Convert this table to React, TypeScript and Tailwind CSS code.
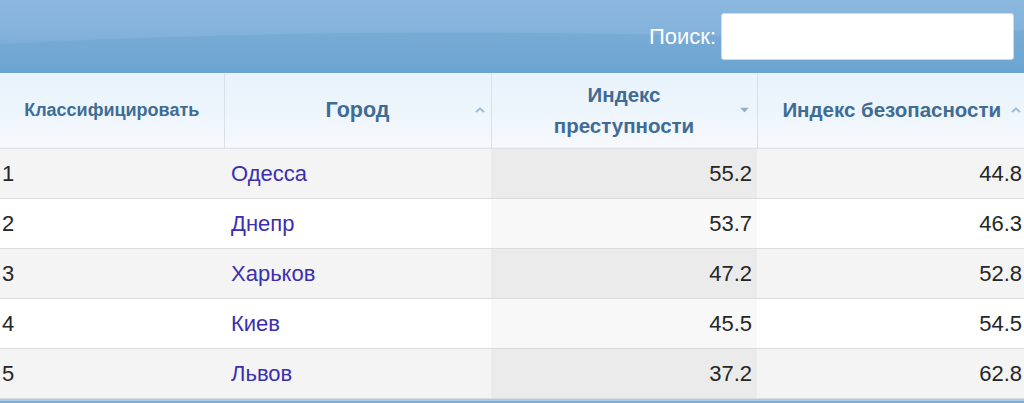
import React from 'react'

type Row = { rank: number; city: string; crime: string; safety: string }

const rows: Row[] = [
  { rank: 1, city: 'Одесса', crime: '55.2', safety: '44.8' },
  { rank: 2, city: 'Днепр', crime: '53.7', safety: '46.3' },
  { rank: 3, city: 'Харьков', crime: '47.2', safety: '52.8' },
  { rank: 4, city: 'Киев', crime: '45.5', safety: '54.5' },
  { rank: 5, city: 'Львов', crime: '37.2', safety: '62.8' },
]

function ChevronUp() {
  return (
    <svg width="10" height="6" viewBox="0 0 10 6" className="absolute top-1/2 -translate-y-1/2">
      <path d="M1 5 L5 1.5 L9 5" fill="none" stroke="#9dbad3" strokeWidth="1.8" />
    </svg>
  )
}

function TriangleDown() {
  return (
    <svg width="9" height="5" viewBox="0 0 9 5" className="absolute top-1/2 -translate-y-1/2">
      <path d="M0 0 L9 0 L4.5 5 Z" fill="#8fb0cc" />
    </svg>
  )
}

export default function App() {
  return (
    <div className="w-[1024px] h-[403px] overflow-hidden bg-white font-['Liberation_Sans',Arial,sans-serif]">
      {/* top bar */}
      <div className="relative h-[73px] bg-gradient-to-b from-[#8cb8de] via-[#82b1da] to-[#6aa3d1] flex items-center justify-end pr-[10px] overflow-hidden">
        <svg className="absolute inset-0" width="1024" height="73" viewBox="0 0 1024 73" preserveAspectRatio="none">
          <path d="M0 44 C 200 34, 400 30, 620 34 S 900 40, 1024 30 L1024 73 L0 73 Z" fill="#6ea5d2" opacity="0.55" />
        </svg>
        <span className="relative text-white text-[22px] mr-[5px]">Поиск:</span>
        <div className="relative w-[293px] h-[47px] bg-white rounded-[3px] border border-[#c9dcec]" />
      </div>

      <table className="table-fixed border-collapse w-[1024px]">
        <colgroup>
          <col className="w-[224px]" />
          <col className="w-[267px]" />
          <col className="w-[266px]" />
          <col className="w-[267px]" />
        </colgroup>
        <thead>
          <tr className="h-[75px] bg-gradient-to-b from-[#e9f3fc] via-[#edf5fc] to-[#f6f9fd] border-b border-[#dfe4ea] text-[#3f6c94] font-bold">
            <th className="text-[18px] text-center align-middle">Классифицировать</th>
            <th className="relative text-[21.5px] text-center align-middle border-l border-[#d8e1ea]">
              Город
              <span className="absolute right-[16px] top-1/2"><ChevronUp /></span>
            </th>
            <th className="relative text-[20.5px] leading-[31px] text-center align-middle border-l border-[#d8e1ea]">
              Индекс
              <br />
              преступности
              <span className="absolute right-[17px] top-1/2"><TriangleDown /></span>
            </th>
            <th className="relative text-[20.5px] text-center align-middle border-l border-[#d8e1ea]">
              <span className="pl-[2px]">Индекс безопасности</span>
              <span className="absolute right-[13px] top-1/2"><ChevronUp /></span>
            </th>
          </tr>
        </thead>
        <tbody className="text-[22px] text-[#262626]">
          {rows.map((r) => {
            const odd = r.rank % 2 === 1
            return (
              <tr key={r.rank} className={`h-[50px] border-b border-[#dcdcdc] ${odd ? 'bg-[#f4f4f4]' : 'bg-white'}`}>
                <td className="pl-[2px]">{r.rank}</td>
                <td className="pl-[7px] text-[#3b2fb0]">{r.city}</td>
                <td className={`text-right pr-[5px] ${odd ? 'bg-[#ebebeb]' : 'bg-[#f8f8f8]'}`}>{r.crime}</td>
                <td className="text-right pr-[2px]">{r.safety}</td>
              </tr>
            )
          })}
        </tbody>
      </table>
      <div className="h-[10px] bg-[#7eb0da] border-t-2 border-[#a9cbe8]" />
    </div>
  )
}
